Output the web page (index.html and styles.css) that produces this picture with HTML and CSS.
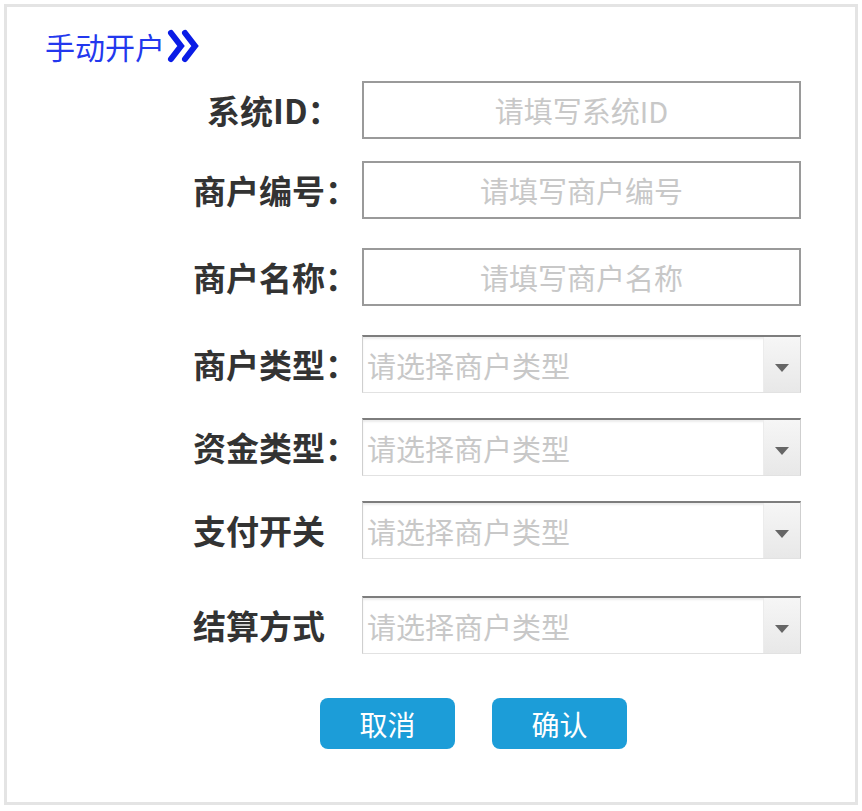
FILE: index.html
```html
<!DOCTYPE html>
<html lang="zh-CN">
<head>
    <meta charset="UTF-8">
    <meta name="viewport" content="width=device-width, initial-scale=1.0">
    <title>手动开户</title>
    <link rel="stylesheet" href="styles.css">
</head>
<body>
    <div class="panel">
        <div class="panel-header">
            <h1 class="title">手动开户</h1>
            <svg class="title-arrow" width="34" height="34" viewBox="0 0 34 34">
                <polyline points="4,4 14,17 4,30" />
                <polyline points="18,4 28,17 18,30" />
            </svg>
        </div>

        <form class="form">
            <div class="row">
                <label class="label label-short">系统ID：</label>
                <input class="text-input" type="text" placeholder="请填写系统ID">
            </div>
            <div class="row row-gap-sm">
                <label class="label">商户编号：</label>
                <input class="text-input" type="text" placeholder="请填写商户编号">
            </div>
            <div class="row row-gap-lg">
                <label class="label">商户名称：</label>
                <input class="text-input" type="text" placeholder="请填写商户名称">
            </div>
            <div class="row row-gap-lg">
                <label class="label">商户类型：</label>
                <div class="select">
                    <span class="select-text">请选择商户类型</span>
                    <span class="select-arrow"></span>
                </div>
            </div>
            <div class="row row-gap-md">
                <label class="label">资金类型：</label>
                <div class="select">
                    <span class="select-text">请选择商户类型</span>
                    <span class="select-arrow"></span>
                </div>
            </div>
            <div class="row row-gap-md">
                <label class="label">支付开关</label>
                <div class="select">
                    <span class="select-text">请选择商户类型</span>
                    <span class="select-arrow"></span>
                </div>
            </div>
            <div class="row row-gap-xl">
                <label class="label">结算方式</label>
                <div class="select">
                    <span class="select-text">请选择商户类型</span>
                    <span class="select-arrow"></span>
                </div>
            </div>

            <div class="actions">
                <button type="button" class="btn">取消</button>
                <button type="button" class="btn">确认</button>
            </div>
        </form>
    </div>
</body>
</html>
```

FILE: styles.css
```css
:root {
    --title-color: #2338ee;
    --arrow-color: #0a1ce6;
    --label-color: #333333;
    --placeholder-color: #c8c8c8;
    --btn-color: #1c9dd8;
    --panel-border: #e4e4e4;
}

* {
    margin: 0;
    padding: 0;
    box-sizing: border-box;
    font-family: "Noto Sans CJK SC", "Noto Sans", sans-serif;
}

body {
    background: #ffffff;
    padding: 4px;
}

.panel {
    border: 3px solid var(--panel-border);
    height: 801px;
    padding-top: 19px;
}

.panel-header {
    display: flex;
    align-items: center;
    padding-left: 38px;
    height: 40px;
}

.title {
    color: var(--title-color);
    font-size: 30px;
    font-weight: 400;
    line-height: 1;
}

.title-arrow {
    margin-left: 2px;
}

.title-arrow polyline {
    fill: none;
    stroke: var(--arrow-color);
    stroke-width: 6;
    stroke-linecap: round;
    stroke-linejoin: miter;
}

.form {
    display: flex;
    flex-direction: column;
    padding-left: 186px;
    margin-top: 15px;
}

.row {
    display: flex;
    align-items: center;
    height: 58px;
}

.row-gap-sm {
    margin-top: 22px;
}

.row-gap-md {
    margin-top: 25px;
}

.row-gap-lg {
    margin-top: 29px;
}

.row-gap-xl {
    margin-top: 37px;
}

.label {
    width: 169px;
    flex-shrink: 0;
    color: var(--label-color);
    font-size: 33px;
    font-weight: 700;
    white-space: nowrap;
}

.label-short {
    padding-left: 14px;
}

.text-input {
    width: 439px;
    height: 58px;
    border: 2px solid #9a9a9a;
    outline: none;
    text-align: center;
    font-size: 29px;
    color: #333;
}

.text-input::placeholder {
    color: var(--placeholder-color);
}

.select {
    display: flex;
    width: 439px;
    height: 58px;
    border: 1px solid #cfcfcf;
    border-top: 2px solid #7d7d7d;
    border-bottom-color: #e2e2e2;
    box-shadow: inset 0 2px 2px rgba(0, 0, 0, 0.08);
}

.select-text {
    flex: 1;
    display: flex;
    align-items: center;
    padding-left: 4px;
    font-size: 29px;
    color: var(--placeholder-color);
    white-space: nowrap;
}

.select-arrow {
    width: 37px;
    display: flex;
    align-items: center;
    justify-content: center;
    padding-top: 6px;
    background: linear-gradient(#f6f6f6, #e8e8e8);
    border-left: 1px solid #ececec;
}

.select-arrow::after {
    content: "";
    border-left: 7px solid transparent;
    border-right: 7px solid transparent;
    border-top: 8px solid #666666;
}

.actions {
    display: flex;
    gap: 37px;
    margin-top: 44px;
    padding-left: 127px;
}

.btn {
    width: 135px;
    height: 51px;
    border: none;
    border-radius: 8px;
    background-color: var(--btn-color);
    color: #ffffff;
    font-size: 28px;
    cursor: pointer;
}
```
